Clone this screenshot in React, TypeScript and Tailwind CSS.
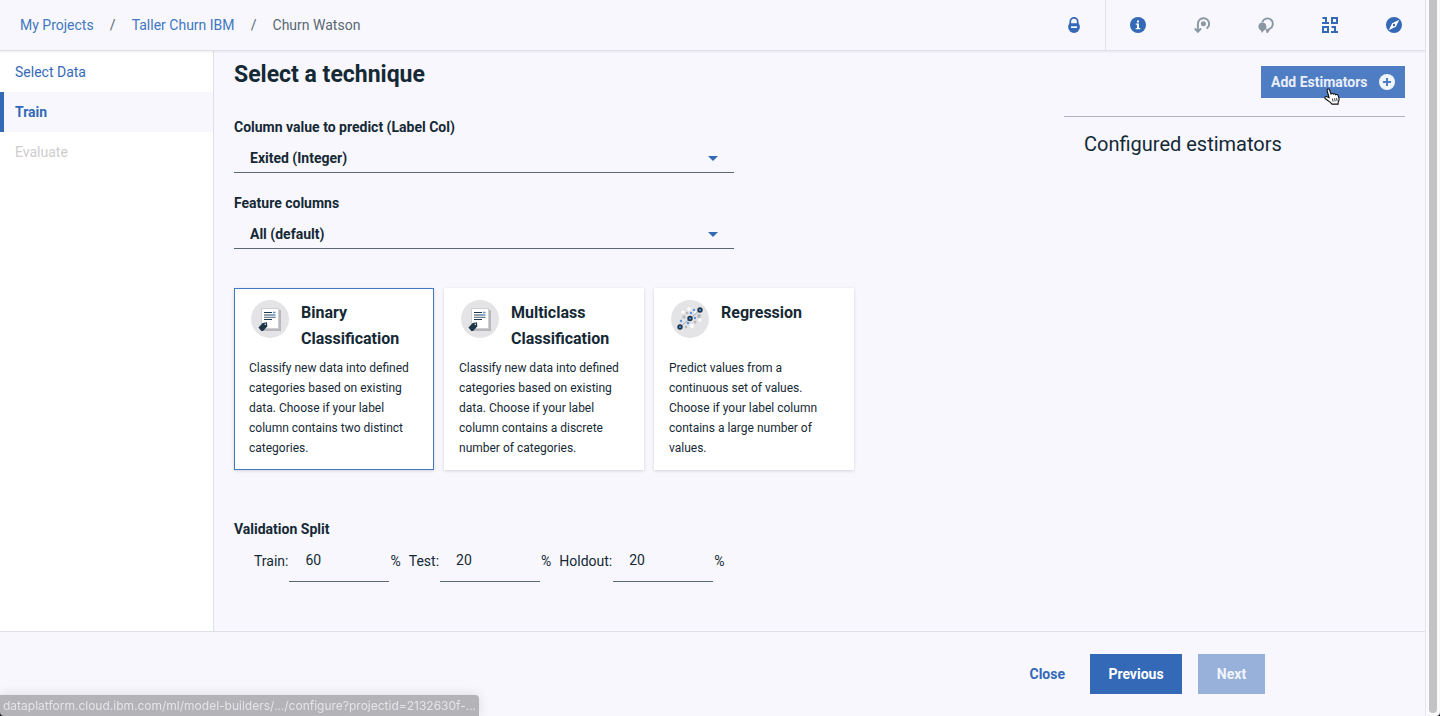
import { useState, type ReactNode } from "react";

const crumbs = ["My Projects", "Taller Churn IBM"];

function DocumentIcon() {
  return (
    <svg viewBox="0 0 38 38" className="size-[38px] shrink-0" aria-hidden="true">
      <circle cx="19" cy="19" r="19" fill="#e4e3e6" />
      <path d="M12 10h18v21H12z" fill="#b9b7bc" />
      <path d="M10.500 8.500h17v20h-17z" fill="#fff" stroke="#cfced3" strokeWidth="1" />
      <path d="M13 12.500h8M13 19.500h8" stroke="#1d3649" strokeWidth="1.200" />
      <path d="M22 12.500h2.500M20 15h4.500" stroke="#5f8fc4" strokeWidth="1.300" />
      <path d="M13 15h7M13 17.300h11.500" stroke="#6f7f8c" strokeWidth="1.300" />
      <path d="M7.500 27.500l4.200-4.500 4.300-.7.300 4.200-4.300 4.500h-1.700z" fill="#1d3649" />
      <circle cx="14.300" cy="24.300" r=".7" fill="#fff" />
    </svg>
  );
}

function ScatterIcon() {
  const dots: [number, number, number, string][] = [
    [18, 9, 1.8, "#fff"], [12, 12, 1.6, "#fff"], [29, 20, 1.5, "#fff"], [21, 26, 2, "#fff"], [24, 12, 1.5, "#fff"],
    [16, 13, 1.3, "#b9b9bd"], [13, 17, 1.7, "#b9b9bd"], [28, 16, 2, "#b9b9bd"], [24, 22, 1.5, "#b9b9bd"], [15, 27, 1.3, "#b9b9bd"],
    [20, 13, 1.2, "#5596e6"], [23, 10, 1.2, "#5596e6"], [10, 21, 1.2, "#5596e6"], [24, 18, 1.2, "#5596e6"], [17, 23, 1.3, "#5596e6"],
  ];
  return (
    <svg viewBox="0 0 38 38" className="size-[38px] shrink-0" aria-hidden="true">
      <circle cx="19" cy="19" r="19" fill="#e4e3e6" />
      {dots.map(([x, y, r, fill]) => (
        <circle key={`${x}-${y}`} cx={x} cy={y} r={r} fill={fill} />
      ))}
      <path d="M9 27L19 18.500 29 10" fill="none" stroke="#a7a9af" strokeWidth="1" />
      {[[9, 27], [19, 18.5], [29, 10]].map(([x, y]) => (
        <g key={x}>
          <circle cx={x} cy={y} r="2.700" fill="#1d3649" />
          <circle cx={x} cy={y} r="1.100" fill="#5596e6" />
        </g>
      ))}
    </svg>
  );
}

const techniques = [
  {
    title: "Binary Classification",
    text: "Classify new data into defined categories based on existing data. Choose if your label column contains two distinct categories.",
    icon: <DocumentIcon />,
  },
  {
    title: "Multiclass Classification",
    text: "Classify new data into defined categories based on existing data. Choose if your label column contains a discrete number of categories.",
    icon: <DocumentIcon />,
  },
  {
    title: "Regression",
    text: "Predict values from a continuous set of values. Choose if your label column contains a large number of values.",
    icon: <ScatterIcon />,
  },
];

const tools: { label: string; icon: ReactNode }[] = [
  {
    label: "Information",
    icon: (
      <svg viewBox="0 0 16 16" className="size-4" aria-hidden="true">
        <circle cx="8" cy="8" r="8" fill="#3469b7" />
        <path d="M7 3.500h2v2H7zM5.800 6.500H9V11h1.300v1.300H5.700V11H7V7.800H5.800z" fill="#fff" />
      </svg>
    ),
  },
  {
    label: "History",
    icon: (
      <svg viewBox="0 0 16 16" className="size-4" aria-hidden="true" fill="none" stroke="#8897a2" strokeWidth="1.900">
        <path d="M3.900 14.500V6.800a5.600 5.600 0 1 1 10.200 3.200l-1.400 1.600" />
        <path d="M.8 11.500l3.100 3.300L7 11.500" />
        <circle cx="9.400" cy="6.800" r="2.500" fill="#8897a2" stroke="none" />
      </svg>
    ),
  },
  {
    label: "Comments",
    icon: (
      <svg viewBox="0 0 16 16" className="size-4" aria-hidden="true">
        <path d="M4.300 5.200A5.400 5.400 0 1 1 11.500 11.800L9.400 15 8.400 11.900" fill="none" stroke="#8897a2" strokeWidth="1.900" />
        <path d="M4.200 5.600a4.200 4.200 0 0 1 1.800 8L3.700 16l-.6-2.300A4.200 4.200 0 0 1 4.200 5.600z" fill="#8897a2" />
      </svg>
    ),
  },
  {
    label: "Data",
    icon: (
      <svg viewBox="0 0 16 16" className="size-4" aria-hidden="true" fill="none" stroke="#3469b7" strokeWidth="2">
        <path d="M.5 1H4v5M0 6h7M10 1h5v5h-5z" />
        <path d="M1 10h5v5H1zM9.500 10H13v5M9 15h7" />
      </svg>
    ),
  },
  {
    label: "Explore",
    icon: (
      <svg viewBox="0 0 16 16" className="size-4" aria-hidden="true">
        <circle cx="8" cy="8" r="8" fill="#3469b7" />
        <path d="M13.300 2.700L9.800 9.800 2.700 13.300l3.500-7.100z" fill="#fff" />
        <circle cx="8" cy="8" r="1.200" fill="#3469b7" />
      </svg>
    ),
  },
];

function SelectField({ id, label, options }: { id: string; label: string; options: string[] }) {
  return (
    <div className="flex w-[500px] max-w-full flex-col">
      <label htmlFor={id} className="leading-5 font-bold">
        {label}
      </label>
      <div className="mt-2 grid h-7 items-center border-b border-[#5a6872]">
        <select
          id={id}
          className="col-start-1 row-start-1 h-full w-full appearance-none bg-transparent pr-10 pb-px pl-4 font-bold outline-none"
        >
          {options.map((o) => (
            <option key={o}>{o}</option>
          ))}
        </select>
        <svg
          viewBox="0 0 10 5"
          className="pointer-events-none col-start-1 row-start-1 mr-4 h-[5px] w-[10px] justify-self-end"
          aria-hidden="true"
        >
          <path d="M0 0h10L5 5z" fill="#3469b7" />
        </svg>
      </div>
    </div>
  );
}

function SplitField({ id, label, value }: { id: string; label: string; value: string }) {
  return (
    <div className="flex items-center">
      <label htmlFor={id} className="pr-px">
        {label}:
      </label>
      <input
        id={id}
        defaultValue={value}
        className="h-[43px] w-[100px] border-b border-[#5a6872] bg-transparent px-4 outline-none"
      />
      <span className="pl-px">%</span>
    </div>
  );
}

export default function App() {
  const [selected, setSelected] = useState(0);
  return (
    <div className="flex min-h-screen bg-[#f7f7fd] font-['Roboto','Noto_Sans',sans-serif] text-sm text-[#152935]">
      <div className="flex min-w-0 grow flex-col border-r border-[#e6e6ee]">
        <header className="z-10 flex h-[51px] items-center justify-between border-b border-[#dfe1e8] shadow-[0_1px_2px_rgba(0,0,0,0.08)]">
          <nav aria-label="Breadcrumb" className="flex pl-5">
            {crumbs.map((c) => (
              <span key={c} className="flex">
                <a href="#" className="text-[#4178be]">
                  {c}
                </a>
                <span className="w-[38px] text-center text-[#5a6872]">/</span>
              </span>
            ))}
            <span className="text-[#5a6872]">Churn Watson</span>
          </nav>
          <div className="-mr-px flex h-full">
            <button aria-label="Security" className="flex w-16 items-center justify-center border-r border-[#dfe1e8]">
              <svg viewBox="0 0 12 16" className="h-4 w-3" aria-hidden="true">
                <path d="M2.300 8V4.500a3.700 3.700 0 0 1 7.400 0V8" fill="none" stroke="#3469b7" strokeWidth="1.700" />
                <path d="M1.500 6.200h9a5.900 5.900 0 1 1-9 0z" fill="#3469b7" />
                <path d="M3 9.300h6v1.700H3z" fill="#fff" />
              </svg>
            </button>
            {tools.map((t) => (
              <button key={t.label} aria-label={t.label} className="flex w-16 items-center justify-center">
                {t.icon}
              </button>
            ))}
          </div>
        </header>

        <div className="flex grow">
          <nav
            aria-label="Steps"
            className="flex w-[214px] shrink-0 flex-col border-r border-[#dfe1e8] bg-white pt-px leading-10"
          >
            <a href="#" className="pl-[15px] text-[#3469b7]">
              Select Data
            </a>
            <a href="#" className="border-l-4 border-[#3469b7] bg-[#f7f7fd] pl-[11px] font-bold text-[#3469b7]">
              Train
            </a>
            <span className="pl-[15px] text-[#cdcdcd]">Evaluate</span>
          </nav>

          <main className="flex grow justify-between gap-8 px-5">
            <div className="flex flex-col pt-2">
              <h1 className="text-[23px] leading-8 font-bold">Select a technique</h1>
              <div className="mt-[26px] flex flex-col gap-5">
                <SelectField id="label-col" label="Column value to predict (Label Col)" options={["Exited (Integer)"]} />
                <SelectField id="features" label="Feature columns" options={["All (default)"]} />
              </div>
              <div className="mt-[39px] flex gap-[10px]">
                {techniques.map((t, i) => (
                  <button
                    key={t.title}
                    aria-pressed={selected === i}
                    onClick={() => setSelected(i)}
                    className={`flex w-[200px] flex-col border bg-white px-[14px] py-[11px] text-left shadow-[0_1px_3px_rgba(0,0,0,0.15)] ${
                      selected === i ? "border-[#4178be]" : "border-transparent"
                    }`}
                  >
                    <span className="flex h-[58px] gap-3 pl-[2px]">
                      <span>{t.icon}</span>
                      <span className="text-base leading-[26px] font-bold">{t.title}</span>
                    </span>
                    <span className="text-xs leading-5">{t.text}</span>
                  </button>
                ))}
              </div>
              <h2 className="mt-[49px] leading-5 font-bold">Validation Split</h2>
              <div className="flex gap-2 pl-5">
                <SplitField id="train" label="Train" value="60" />
                <SplitField id="test" label="Test" value="20" />
                <SplitField id="holdout" label="Holdout" value="20" />
              </div>
            </div>

            <aside className="flex w-[341px] shrink-0 flex-col pt-[15px]">
              <button className="flex h-8 w-36 items-center justify-between self-end bg-[#4f7dc3] px-[10px] font-bold text-[#e9eefa]">
                Add Estimators
                <svg viewBox="0 0 16 16" className="size-4" aria-hidden="true">
                  <circle cx="8" cy="8" r="8" fill="#f2f5fc" />
                  <path d="M8 4v8M4 8h8" stroke="#4f7dc3" strokeWidth="2" />
                </svg>
              </button>
              <h2 className="mt-[18px] border-t border-[#aeb4ba] pt-[11px] pl-5 text-xl leading-8">Configured estimators</h2>
            </aside>
          </main>
        </div>

        <footer className="flex h-[85px] items-center justify-end gap-4 border-t border-[#dfe1e8] pr-40 font-bold">
          <button className="h-10 px-2 text-[#3469b7]">Close</button>
          <button className="ml-px h-10 w-[92px] bg-[#3469b7] text-white">Previous</button>
          <button disabled className="h-10 w-[67px] bg-[#98b1da] text-[#f2f5fc]">
            Next
          </button>
        </footer>
      </div>

      <div className="flex w-[14px] shrink-0 bg-[#fafafd] pb-[3px] pl-[3px]" aria-hidden="true">
        <div className="w-2 rounded-b-full bg-[#c3c2c5]" />
      </div>

      <div className="fixed bottom-0 left-0 h-[21px] w-[479px] overflow-hidden rounded-tr bg-[#b4b3b8] pl-[3px] font-['Inter','Roboto',sans-serif] text-xs leading-[21px] whitespace-nowrap text-[#e4e4e9] shadow-[0_0_12px_rgba(0,0,0,0.12)]">
        dataplatform.cloud.ibm.com/ml/model-builders/.../configure?projectid=2132630f-...
      </div>
      <svg viewBox="0 0 4 4" className="fixed bottom-0 left-0 size-1" aria-hidden="true">
        <path d="M0 0q0 4 4 4H0z" fill="#111" />
      </svg>
      <svg viewBox="0 0 4 4" className="fixed right-0 bottom-0 size-1" aria-hidden="true">
        <path d="M4 0q0 4-4 4h4z" fill="#111" />
      </svg>

      <svg viewBox="0 0 16 17" className="pointer-events-none fixed top-[88px] right-[100px] z-20 h-[17px] w-4" aria-hidden="true">
        <path
          d="M5 9.500L3.200 3C2.700.9 4.900.2 5.500 1.900L7 6c.7-.8 1.900-.7 2.300.1.800-.6 2-.3 2.300.6 1-.5 2.200-.1 2.500 1l.9 2.800c.4 1.500-.4 2.500-.9 3.600v2H8l-1.600-1.800L1.300 10.800C.1 9.300 1.700 8 3 8.700z"
          fill="#fff"
          stroke="#111"
          strokeWidth="1.100"
        />
        <path d="M8.400 10.500l.7 3.200M10.500 10.200l.7 3.200M12.500 10l.6 3" stroke="#111" strokeWidth=".8" />
      </svg>
    </div>
  );
}
